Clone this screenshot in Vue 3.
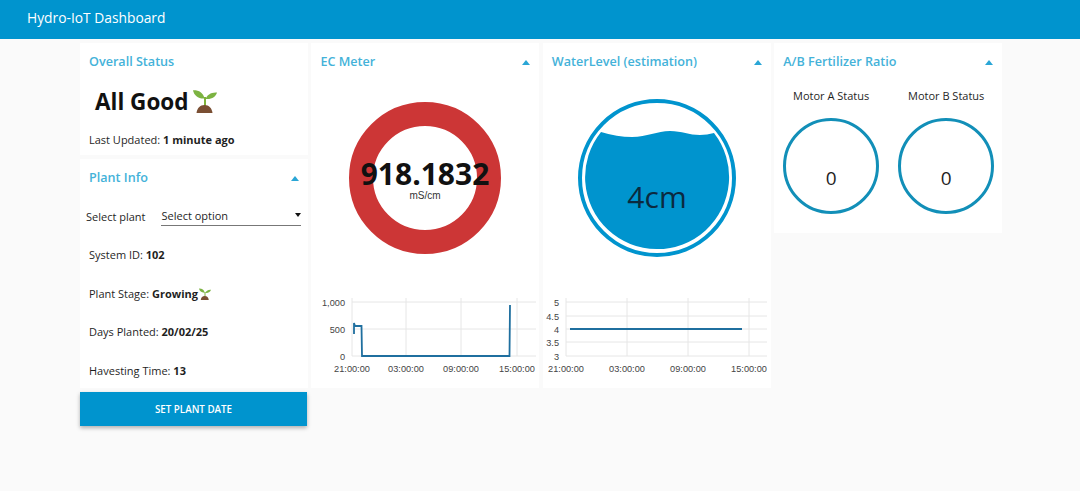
<template>
  <div class="page">
    <header class="topbar">Hydro-IoT Dashboard</header>
    <main class="grid">
      <div class="stack">
        <section class="card status">
          <h2 class="title">Overall Status</h2>
          <div class="good">
            <span>All Good</span>
            <svg class="sprout large" viewBox="0 0 24 24">
              <path d="M11 17V8h2v9z" fill="#7fb23a" />
              <path d="M11.500 9.500C10 3.500 6 1 0 1.200 1 6.500 5.500 10 11.500 9.500z" fill="#7cb342" />
              <path d="M12.500 10C14 6 18 3 24 3.500 23 7.500 18.500 10.800 12.500 10z" fill="#7cb342" />
              <path d="M3.500 24c.6-5 3.500-8 8-8s7.400 3 8 8z" fill="#7a4f33" />
            </svg>
          </div>
          <p class="line">Last Updated: <b>1 minute ago</b></p>
        </section>
        <section class="card info">
          <div class="head">
            <h2 class="title">Plant Info</h2>
            <i class="arrow"></i>
          </div>
          <div class="picker">
            <span>Select plant</span>
            <div class="select">Select option<i class="caret"></i></div>
          </div>
          <p class="row">System ID: <b>102</b></p>
          <p class="row">
            Plant Stage: <b>Growing</b>
            <svg class="sprout" viewBox="0 0 24 24">
              <path d="M11 17V8h2v9z" fill="#7fb23a" />
              <path d="M11.500 9.500C10 3.500 6 1 0 1.200 1 6.500 5.500 10 11.500 9.500z" fill="#7cb342" />
              <path d="M12.500 10C14 6 18 3 24 3.500 23 7.500 18.500 10.800 12.500 10z" fill="#7cb342" />
              <path d="M3.500 24c.6-5 3.500-8 8-8s7.400 3 8 8z" fill="#7a4f33" />
            </svg>
          </p>
          <p class="row">Days Planted: <b>20/02/25</b></p>
          <p class="row">Havesting Time: <b>13</b></p>
        </section>
        <button class="action">SET PLANT DATE</button>
      </div>

      <section v-for="chart in charts" :key="chart.title" class="card tall">
        <div class="head">
          <h2 class="title">{{ chart.title }}</h2>
          <i class="arrow"></i>
        </div>
        <div class="gauge">
          <svg v-if="chart.kind === 'ec'" width="228" height="160" viewBox="-114 -80 228 160">
            <circle r="64" fill="none" stroke="#cc3636" stroke-width="24" />
            <text class="ec-value" y="7" text-anchor="middle">918.1832</text>
            <text class="ec-unit" y="21" text-anchor="middle">mS/cm</text>
          </svg>
          <svg v-else width="228" height="160" viewBox="-114 -80 228 160">
            <circle r="77" fill="none" stroke="#0094ce" stroke-width="4" />
            <path
              d="M-56 -46Q-40 -41 -25 -41C-10 -41 0 -47 13 -47C25 -47 32 -43 43 -43Q50 -43 57 -45A72 72 0 1 1 -56 -46Z"
              fill="#0094ce"
            />
            <text class="level" y="30" text-anchor="middle">4cm</text>
          </svg>
        </div>
        <svg class="plot" width="228" height="90" viewBox="0 0 228 90">
          <line
            v-for="y in chart.rows"
            :key="y.label"
            :x1="chart.left"
            :x2="chart.right"
            :y1="y.at"
            :y2="y.at"
            stroke="#e6e6e6"
          />
          <line
            v-for="x in chart.cols"
            :key="x.label"
            :x1="x.at"
            :x2="x.at"
            y1="8"
            y2="66"
            stroke="#e6e6e6"
          />
          <text
            v-for="y in chart.rows"
            :key="y.label"
            class="tick"
            :x="chart.left - 7"
            :y="y.at + 4"
            text-anchor="end"
          >{{ y.label }}</text>
          <text
            v-for="x in chart.cols"
            :key="x.label"
            class="tick"
            :x="x.at"
            y="82"
            text-anchor="middle"
          >{{ x.label }}</text>
          <path :d="chart.line" fill="none" stroke="#1f6f9f" stroke-width="1.800" />
        </svg>
      </section>

      <section class="card motors">
        <div class="head">
          <h2 class="title">A/B Fertilizer Ratio</h2>
          <i class="arrow"></i>
        </div>
        <div class="motor-row">
          <div v-for="motor in motors" :key="motor" class="motor">
            <span>{{ motor }}</span>
            <div class="dial">0</div>
          </div>
        </div>
      </section>
    </main>
  </div>
</template>

<script setup>
const times = ["21:00:00", "03:00:00", "09:00:00", "15:00:00"];

const toCols = (list) => list.map((at, i) => ({ at, label: times[i] }));

const charts = [
  {
    kind: "ec",
    title: "EC Meter",
    left: 41,
    right: 225,
    rows: [
      { at: 12, label: "1,000" },
      { at: 39, label: "500" },
      { at: 66, label: "0" },
    ],
    cols: toCols([41, 95, 150, 206]),
    line: "M43 44V33L44 36H50.500L51 66H198.500L199 15",
  },
  {
    kind: "water",
    title: "WaterLevel (estimation)",
    left: 23,
    right: 224,
    rows: [
      { at: 12, label: "5" },
      { at: 26, label: "4.5" },
      { at: 39, label: "4" },
      { at: 52, label: "3.5" },
      { at: 66, label: "3" },
    ],
    cols: toCols([23, 84, 145, 206]),
    line: "M27 39H199",
  },
];

const motors = ["Motor A Status", "Motor B Status"];
</script>

<style>
body {
  background: #fafafa;
}
</style>

<style scoped>
.page {
  height: 491px;
  overflow: hidden;
  background: #fafafa;
  font-family: "Open Sans", "Noto Sans", sans-serif;
  color: #1f1f1f;
}

.topbar {
  height: 39px;
  box-sizing: border-box;
  padding: 8px 27px;
  background: #0094ce;
  color: #fff;
  font-size: 13.800px;
  line-height: 20px;
}

.grid {
  display: grid;
  grid-template-columns: repeat(4, 228px);
  gap: 3.400px;
  align-items: start;
  padding: 4px 0 0 80px;
}

.stack {
  display: flex;
  flex-direction: column;
  gap: 4px;
}

.card {
  background: #fff;
  box-sizing: border-box;
}

.title {
  margin: 0;
  font-size: 12.600px;
  line-height: 18px;
  font-weight: 600;
  color: #44b2d9;
}

.head {
  display: flex;
  justify-content: space-between;
  align-items: center;
  padding: 10px 9px 0;
}

.arrow {
  width: 0;
  height: 0;
  border: 4.500px solid transparent;
  border-top: 0;
  border-bottom: 5px solid #2aa6d6;
}

.status {
  height: 112px;
  padding: 10px 9px 0;
}

.good {
  display: flex;
  align-items: center;
  gap: 4px;
  height: 40px;
  margin-top: 10px;
  padding-left: 6px;
  font-size: 22.500px;
  font-weight: 700;
  color: #111;
}

.sprout {
  width: 12px;
  height: 12px;
  margin-left: 1px;
  vertical-align: -2px;
}

.sprout.large {
  width: 24px;
  height: 24px;
  margin-left: 0;
}

.line,
.row {
  margin: 0;
  font-size: 11px;
  line-height: 16px;
}

.line {
  margin-top: 11px;
}

.info {
  height: 229px;
}

.picker {
  display: flex;
  align-items: center;
  gap: 15px;
  margin-top: 20px;
  padding: 0 7px 0 6px;
  font-size: 11px;
}

.select {
  position: relative;
  flex: 1;
  padding: 0 1px;
  height: 19px;
  line-height: 17px;
  box-sizing: border-box;
  border-bottom: 1.500px solid #777;
}

.caret {
  position: absolute;
  right: 0;
  top: 6px;
  border: 3px solid transparent;
  border-bottom: 0;
  border-top: 4px solid #111;
}

.row {
  padding: 0 9px;
  margin-top: 22.700px;
}

.picker + .row {
  margin-top: 21px;
}

.action {
  height: 34px;
  width: 227px;
  border: 0;
  background: #0094ce;
  color: #fff;
  font: 600 9.800px "Open Sans", "Noto Sans", sans-serif;
  box-shadow: 0 2px 4px rgba(0, 0, 0, 0.3);
}

.tall {
  height: 345px;
}

.gauge {
  display: flex;
  height: 160px;
  margin-top: 27px;
}

.plot {
  display: block;
  margin-top: 32px;
}

.tick {
  font: 9.200px "Liberation Sans", Arial, sans-serif;
  fill: #444;
}

.ec-value {
  font: 700 30px "Open Sans", sans-serif;
  fill: #111;
}

.ec-unit {
  font: 10px "Liberation Sans", Arial, sans-serif;
  fill: #333;
}

.level {
  font: 400 30px "Open Sans", sans-serif;
  fill: #0b2a3f;
}

.motors {
  height: 190px;
}

.motor-row {
  display: flex;
  justify-content: space-between;
  padding: 17px 8px 0 9px;
}

.motor {
  display: flex;
  flex-direction: column;
  align-items: center;
  gap: 14px;
  width: 96px;
  font-size: 11px;
  line-height: 16px;
}

.dial {
  width: 96px;
  height: 96px;
  box-sizing: border-box;
  border: 3px solid #128fb8;
  border-radius: 50%;
  padding-top: 45px;
  text-align: center;
  font-size: 19px;
  line-height: 24px;
}
</style>
